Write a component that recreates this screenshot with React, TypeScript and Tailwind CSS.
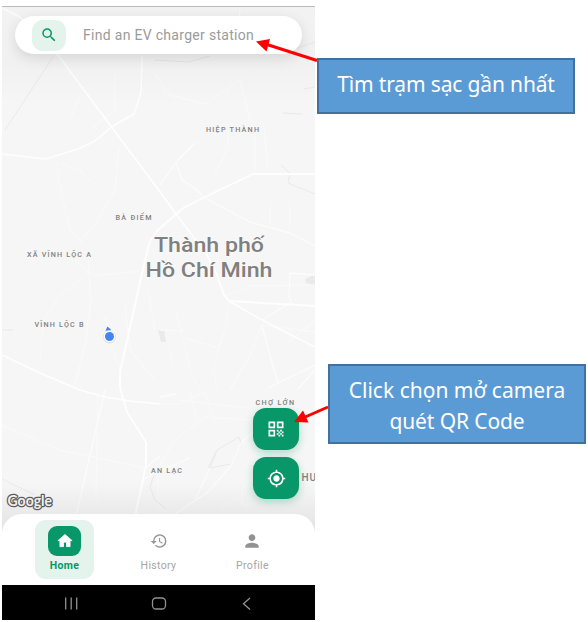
import React from "react";
import { MdHistory, MdMyLocation, MdPerson, MdQrCode, MdSearch } from "react-icons/md";

const majorRoads = [
  "M2 8 20 17 58 55 113 129 155 185 176 214 207 255 217 275 224 295 229 301 315 306",
  "M315 174H253L205 197 185 207 176 214 158 230 150 241 145 260 120 372V388L127 412 146 442 146 465 143 480 135 516",
];

const roads = [
  "M142 56 141 92 134 114 118 123 109 129 95 141 78 149 46 159 2 154",
  "M229 301 262 320 315 347",
  "M2 355 40 373 80 390 105 397 130 401 160 404",
];

const thinRoads = [
  "M195 143 176 162 160 185M176 162 182 180 196 189 205 198 250 222 290 233 315 246",
  "M315 275 290 273 289 297 292 304M290 303 262 320M262 326 278 384",
  "M315 365 268 388M315 370 297 390",
  "M105 390 76 516",
  "M142 480 160 471 190 458M143 470 160 456",
  "M255 430 241 443 230 467 208 492 175 514M210 468 195 500",
  "M240 10 238 25M160 397 176 394",
];

const minorRoads = [
  "M56 163 62 195 70 230 82 242M60 163 80 171 97 186M119 148 115 190 95 225 82 238",
  "M88 260 91 300 85 345 75 385M92 276 140 271M92 274 75 260",
  "M155 74 170 95 205 104 240 80 250 120M115 75V110L90 130M80 95 70 120",
  "M255 130V173M264 125 268 170M228 130V147L215 175M270 205V225M290 203V228",
  "M228 305 225 330 218 350 214 370 217 390M185 338 220 348M225 296 250 286 315 285",
  "M160 330 185 331M176 310 190 370 200 390M168 340 173 368",
  "M262 325 250 355 230 390M262 325 315 332M285 345 315 320",
  "M160 404 180 404 210 390M190 390 197 420M205 392 215 425M178 400 245 408M160 465 175 440 205 417 250 420",
  "M2 425 60 450 145 468M98 395 97 440 96 500M125 305 130 350 155 380M148 290 155 330",
  "M110 335 105 315M110 342 120 370M40 360 44 320 60 295 90 272",
  "M220 507 237 499 248 507M242 505V490L250 480M158 475V505L166 514",
];

const rails = [
  "M53 57 5 130",
  "M281 165 290 173 288 183 315 194",
  "M2 479 35 495",
  "M217 450 239 437 241 443 231 464 210 468ZM217 450 208 468",
  "M155 472 150 487 155 500 166 509",
  "M155 60 188 62 210 56M295 49 315 42M283 113 302 114M304 89 315 87",
  "M2 330 13 330",
];

const labels = [
  { text: "HIỆP THÀNH", x: 206, y: 131.5, w: 53 },
  { text: "BÀ ĐIỂM", x: 115.5, y: 220, w: 36 },
  { text: "XÃ VĨNH LỘC A", x: 27, y: 257.2, w: 64 },
  { text: "VĨNH LỘC B", x: 34.5, y: 327, w: 49 },
  { text: "CHỢ LỚN", x: 255.5, y: 405.2, w: 38.5 },
  { text: "AN LẠC", x: 151, y: 472.7, w: 31 },
];

function CityMap() {
  return (
    <svg viewBox="2 6 313 540" className="absolute left-0 top-0 h-[540px] w-[313px]" fontFamily="Roboto, sans-serif">
      <defs>
        <linearGradient id="top" x1="0" y1="0" x2="0" y2="1">
          <stop offset="0" stopColor="#000" stopOpacity="0.015" />
          <stop offset="0.6" stopColor="#000" stopOpacity="0.02" />
          <stop offset="1" stopColor="#000" stopOpacity="0" />
        </linearGradient>
        <linearGradient id="bottom" x1="0" y1="0" x2="0" y2="1">
          <stop offset="0" stopColor="#000" stopOpacity="0" />
          <stop offset="1" stopColor="#000" stopOpacity="0.1" />
        </linearGradient>
      </defs>
      <rect x="2" y="6" width="313" height="540" fill="#f6f6f6" />
      <path d="M305 279 315 274V286L306 283ZM158 330 164 331 166 342 161 342Z" fill="#eaeaea" />
      <g fill="none" strokeLinejoin="round">
        {minorRoads.map((d) => <path key={d} d={d} stroke="#f9f9f9" strokeWidth="1.3" />)}
        {rails.map((d) => <path key={d} d={d} stroke="#eaeaea" strokeWidth="1" />)}
        {thinRoads.map((d) => <path key={d} d={d} stroke="#fcfcfc" strokeWidth="1.3" />)}
        {roads.map((d) => <path key={d} d={d} stroke="#fefefe" strokeWidth="1.5" />)}
        {majorRoads.map((d) => <path key={d} d={d} stroke="#fefefe" strokeWidth="1.9" />)}
      </g>
      <rect x="2" y="6" width="313" height="100" fill="url(#top)" />
      <rect x="2" y="482" width="313" height="64" fill="url(#bottom)" />
      <g fill="#808080" fontSize="7.2" fontWeight="500" stroke="#f8f8f8" strokeWidth="1" paintOrder="stroke">
        {labels.map((l) => (
          <text key={l.text} x={l.x} y={l.y} textLength={l.w}>{l.text}</text>
        ))}
        <text x="301.5" y="480.5" fontSize="10" letterSpacing="1">HU</text>
      </g>
      <g fill="#808080" fontSize="21" fontWeight="500" stroke="#f9f9f9" strokeWidth="2" paintOrder="stroke">
        <text x="154" y="252" textLength="110" lengthAdjust="spacingAndGlyphs">Thành phố</text>
        <text x="145.5" y="277" textLength="127" lengthAdjust="spacingAndGlyphs">Hồ Chí Minh</text>
      </g>
      <circle cx="109.5" cy="337" r="6.4" fill="#dedede" />
      <circle cx="109.5" cy="336.5" r="5.8" fill="#fff" />
      <circle cx="109.5" cy="336.5" r="4.5" fill="#4285f4" />
      <path d="m107.4 326.5 4 3.4-6 .8Z" fill="#4285f4" />
      <text x="7.5" y="506" fontSize="14.5" fontWeight="700" fill="#f0f0f0" stroke="#5c5c5c" strokeWidth="2.6" strokeLinejoin="round" paintOrder="stroke" textLength="44.5" lengthAdjust="spacingAndGlyphs" fontFamily="Lato, sans-serif">Google</text>
    </svg>
  );
}

function SearchBar() {
  return (
    <div className="relative mx-[13px] mt-2.5 flex h-[38px] items-center rounded-full bg-white pl-[17px] shadow-[0_4px_14px_rgba(0,0,0,0.12)]">
      <div className="flex h-[31px] w-[34px] items-center justify-center rounded-[11px] bg-[#e4f3ec] text-[#079868]">
        <MdSearch size={18} />
      </div>
      <span className="ml-[17px] whitespace-nowrap text-[14px] tracking-[0.3px] text-[#9b9b9b]">Find an EV charger station</span>
    </div>
  );
}

function MapButton({ children }: { children: React.ReactNode }) {
  return (
    <button className="flex h-[42px] w-[46px] items-center justify-center rounded-[13px] bg-[#079768] text-white shadow-[0_3px_9px_rgba(7,151,104,0.3)]">
      {children}
    </button>
  );
}

function HomeIcon() {
  return (
    <svg viewBox="0 0 24 24" className="h-[18px] w-[18px]" fill="currentColor" stroke="currentColor" strokeWidth="1" strokeLinejoin="round">
      <path d="M10 19.5v-6h4v6h4.8v-8h2.7L12 3.2 2.5 11.5h2.7v8z" />
    </svg>
  );
}

function BottomNav() {
  return (
    <nav className="relative flex h-[71px] justify-between rounded-t-[20px] bg-white px-[33px] pt-1.5 text-[10.5px] tracking-[0.35px] text-[#a5a5a5]">
      <div className="flex h-[59px] w-[59px] flex-col items-center rounded-[11px] bg-[#e4f3ec] pt-1.5 font-bold text-[#079768]">
        <div className="flex h-[30px] w-[33px] items-center justify-center rounded-[9px] bg-[#079768] text-white">
          <HomeIcon />
        </div>
        <span className="mt-[3px] leading-[14px]">Home</span>
      </div>
      <div className="flex w-[59px] flex-col items-center">
        <MdHistory size={18} className="mt-3 text-[#969696]" />
        <span className="mt-[9px] leading-[14px]">History</span>
      </div>
      <div className="flex w-[59px] flex-col items-center">
        <MdPerson size={20} className="mr-px mt-[11px] text-[#929292]" />
        <span className="mt-2 leading-[14px]">Profile</span>
      </div>
    </nav>
  );
}

function SystemBar() {
  return (
    <div className="relative h-[35px] bg-black">
      <svg viewBox="2 585 313 35" className="h-[35px] w-[313px]" fill="none" stroke="#929292" strokeWidth="1.3">
        <path d="M65.7 597.5v12M71.2 597.5v12M76.7 597.5v12" />
        <rect x="152.5" y="598" width="13" height="11" rx="3.5" />
        <path d="m250 598-6.5 5.7 6.5 5.8" />
      </svg>
    </div>
  );
}

export default function App() {
  return (
    <main className="relative flex h-[622px] w-[588px] overflow-hidden bg-white font-[Roboto,sans-serif]">
      <section className="relative ml-0.5 mt-1.5 flex h-[614px] w-[313px] shrink-0 flex-col overflow-hidden">
        <CityMap />
        <SearchBar />
        <div className="relative mb-[15px] mr-4 mt-auto flex flex-col items-end gap-[7px]">
          <MapButton><MdQrCode size={20} /></MapButton>
          <MapButton><MdMyLocation size={19} /></MapButton>
        </div>
        <BottomNav />
        <SystemBar />
        <div className="absolute inset-x-0 top-0 h-px bg-[#b9bbb6]" />
      </section>
      <aside className="flex flex-col pl-0.5 pt-[58px] text-center font-['Noto_Sans',sans-serif] text-[21px] text-white">
        <div className="flex h-14 w-[258px] items-center justify-center whitespace-nowrap border-2 border-[#41719c] bg-[#5b9bd5] pb-0.5 tracking-[-0.15px]">
          Tìm trạm sạc gần nhất
        </div>
        <div className="ml-[11px] mt-[250px] flex h-20 w-[258px] flex-col items-center justify-center whitespace-nowrap border-2 border-[#41719c] bg-[#5b9bd5] pt-1 leading-[31px]">
          <span>Click chọn mở camera</span>
          <span className="tracking-[-0.1px]">quét QR Code</span>
        </div>
      </aside>
      <svg viewBox="0 0 588 622" className="pointer-events-none absolute inset-0 h-[622px] w-[588px]" fill="#f00" stroke="#f00">
        <path d="M317 60.5 267 44.5M328 407 304 417.5" strokeWidth="3" />
        <path d="m256 41.5 14-2.5-3.5 12.5ZM294 422l9-11.5 5.5 12Z" stroke="none" />
      </svg>
    </main>
  );
}
